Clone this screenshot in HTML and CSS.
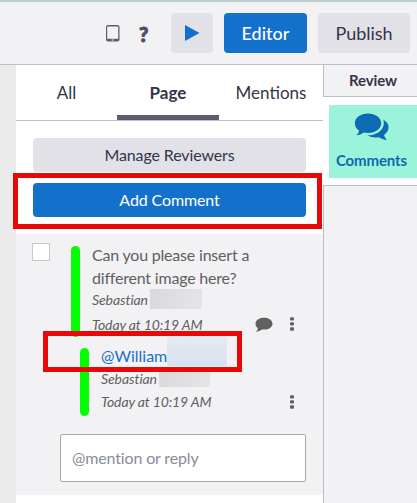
FILE: index.html
```html
<!DOCTYPE html>
<html lang="en">
<head>
<meta charset="utf-8">
<title>Review comments</title>
<link rel="stylesheet" href="styles.css">
</head>
<body>
<header class="toolbar">
  <svg class="tablet" width="14" height="17" viewBox="0 0 14 17"><path fill="#5c5d6e" fill-rule="evenodd" d="M2 0h9.500a2 2 0 0 1 2 2v12.500a2 2 0 0 1-2 2H2a2 2 0 0 1-2-2V2a2 2 0 0 1 2-2zM1.200 1.500v12.300h11V1.500zM5.800 14.500v1h2v-1z"/></svg>
  <span class="help">?</span>
  <button class="btn play" aria-label="Play"><svg width="15" height="16" viewBox="0 0 15 16"><path fill="#1371cc" d="M0 0l14.500 8L0 16z"/></svg></button>
  <button class="btn primary editor">Editor</button>
  <button class="btn publish">Publish</button>
</header>
<div class="workspace">
  <div class="gutter"></div>
  <main class="panel">
    <nav class="tabs">
      <span class="tab">All</span>
      <span class="tab active">Page</span>
      <span class="tab">Mentions</span>
    </nav>
    <div class="actions">
      <button class="btn wide">Manage Reviewers</button>
      <button class="btn primary wide">Add Comment</button>
      <div class="callout callout-add"></div>
    </div>
    <section class="thread">
      <div class="comment">
        <span class="checkbox"></span>
        <span class="bar"></span>
        <div class="content">
          <p class="message">Can you please insert a<br>different image here?</p>
          <p class="author">Sebastian <span class="redacted"></span></p>
          <div class="meta">
            <span class="time">Today at 10:19 AM</span>
            <svg class="bubble" width="18" height="16" viewBox="0 0 18 16"><path fill="#606060" d="M9 1.700c4.800 0 8.500 2.600 8.500 6S13.800 13.600 9 13.600c-.8 0-1.500-.1-2.200-.2C5.200 14.700 3.300 15.600 1 15.700c1-.9 1.700-2 1.900-3.500C1.400 11.100.5 9.500.5 7.700c0-3.400 3.700-6 8.500-6z"/></svg>
            <svg class="dots" width="4" height="14" viewBox="0 0 4 14"><rect y=".2" width="4" height="3.400" rx="1"/><rect y="5.200" width="4" height="3.400" rx="1"/><rect y="10.300" width="4" height="3.400" rx="1"/></svg>
          </div>
        </div>
      </div>
      <div class="comment reply">
        <span class="bar"></span>
        <div class="content">
          <p class="mention">@William<span class="redacted blue"></span></p>
          <p class="author">Sebastian <span class="redacted"></span></p>
          <div class="meta">
            <span class="time">Today at 10:19 AM</span>
            <svg class="dots" width="4" height="14" viewBox="0 0 4 14"><rect y=".2" width="4" height="3.400" rx="1"/><rect y="5.200" width="4" height="3.400" rx="1"/><rect y="10.300" width="4" height="3.400" rx="1"/></svg>
          </div>
        </div>
        <div class="callout callout-mention"></div>
      </div>
      <div class="reply-box">@mention or reply</div>
    </section>
  </main>
  <aside class="side">
    <div class="side-title">Review</div>
    <div class="side-active">
      <div class="side-item">
        <svg width="35" height="28" viewBox="0 0 35 28"><path fill="#0d6bb3" d="M14 .5c7.500 0 13.200 4.300 13.200 9.700S21.500 20 14 20c-1.500 0-2.900-.2-4.200-.5C7.600 21.200 5.500 22 2.500 22.300c1.300-1.300 2.200-2.700 2.600-4.600C2.500 15.900.8 13.200.8 10.200.8 4.800 6.500.5 14 .5z"/><path fill="#0d6bb3" d="M29.400 6.800c3.200 1.800 5.200 4.500 5.200 7.500 0 3.200-1.700 5.700-4.500 7.500.3 2.200 1.300 3.700 2.800 5.200-3.200-.2-5.700-1.200-8-2.700-4.200.7-8.200 0-11.500-2 8.500.2 15.800-4.700 16.400-11.400.1-1.400 0-2.800-.4-4.100z"/></svg>
        <span>Comments</span>
      </div>
    </div>
    <div class="side-rest"></div>
  </aside>
</div>
</body>
</html>
```

FILE: styles.css
```css
* { box-sizing: border-box; }
body {
  margin: 0;
  width: 417px;
  height: 503px;
  overflow: hidden;
  display: flex;
  flex-direction: column;
  font-family: Lato, sans-serif;
  color: #34344a;
  background: #fff;
  white-space: nowrap;
}
p { margin: 0; }
.toolbar {
  height: 65px;
  flex: none;
  display: flex;
  align-items: flex-start;
  padding: 11px 7px 0 106px;
  border-top: 2px solid #b9cfce;
  border-bottom: 1px solid #bcbcca;
  background: #f2f2f4;
}
.tablet { flex: none; margin-top: 12px; }
.help {
  width: 14px;
  margin: 8px 18px 0 19px;
  font: 900 20px/26px Lato, sans-serif;
  color: #50505f;
  -webkit-text-stroke: 1px #50505f;
}
.btn {
  border: 0;
  border-radius: 4px;
  padding: 0;
  font: 18px Lato, sans-serif;
  color: #34344a;
  background: #e2e1e7;
}
.toolbar .btn { height: 40px; flex: none; }
.toolbar .publish { padding-bottom: 1px; letter-spacing: -.05px; }
.btn.primary { color: #fff; background: #1371cc; }
.play { width: 42px; display: flex; align-items: center; justify-content: center; }
.editor { width: 83px; margin: 0 11px; }
.toolbar .editor { padding-bottom: 1px; font-weight: 500; }
.publish { width: 92px; }
.workspace { flex: 1; display: flex; }
.gutter { width: 16px; background: #ebebeb; }
.panel { width: 307px; background: #fff; }
.tabs {
  height: 56px;
  display: grid;
  grid-template-columns: 101px 102px 104px;
  grid-template-rows: 55px;
  border-bottom: 1px solid #bcbcca;
}
.tab { height: 55px; text-align: center; font-size: 17px; line-height: 55px; }
.tab.active { font-weight: 700; border-bottom: 5px solid #5d5d70; }
.actions {
  position: relative;
  height: 113px;
  padding: 17px 17px 0;
  display: flex;
  flex-direction: column;
  gap: 11px;
}
.wide { height: 34px; padding-bottom: 2px; font-size: 16px; letter-spacing: -.12px; }
.callout { position: absolute; border: 5px solid #e90808; }
.callout-add { left: -3px; top: 52px; width: 309px; height: 56px; }
.thread {
  height: 261px;
  padding: 9px 17px 0 16px;
  background: #f2f2f4;
  color: #606060;
}
.comment { display: flex; height: 103px; }
.checkbox { width: 18px; height: 18px; border: 1px solid #c8c8c8; background: #fff; }
.bar { width: 9px; height: 91px; margin: 3px 12px 0 21px; border-radius: 5px; background: #0f0; }
.content { flex: 1; }
.message { font-size: 16px; line-height: 23px; letter-spacing: -.2px; }
.author { display: flex; align-items: center; height: 20px; font-size: 14px; font-style: italic; letter-spacing: -.08px; }
.redacted { width: 52px; height: 20px; margin-left: 2px; background: linear-gradient(110deg, #d9d9dc, #e5e5e8); }
.meta { display: flex; align-items: center; height: 30px; padding-right: 12px; font-size: 14px; font-style: italic; letter-spacing: -.14px; }
.time { flex: 1; }
.dots { margin-left: 17px; fill: #606068; }
.reply { position: relative; height: 88px; padding-left: 48px; }
.reply .bar { height: 68px; margin: 2px 12px 0 0; }
.mention { display: flex; height: 34px; margin-top: -10px; font-size: 16px; line-height: 40px; color: #1371cc; }
.blue { width: 60px; height: 30px; margin: 0; background: linear-gradient(#e6eaf2, #d8e2ef); }
.reply .author { height: 18px; margin-top: -1px; }
.reply .author .redacted { width: 51px; height: 18px; }
.reply .meta { height: 29px; }
.callout-mention { left: 11px; top: -15px; width: 199px; height: 41px; }
.reply-box {
  width: 246px;
  height: 48px;
  margin-left: 28px;
  padding-left: 11px;
  border: 1px solid #a8a8a8;
  border-radius: 2px;
  background: #fff;
  color: #888c96;
  font-size: 16px;
  line-height: 46px;
  letter-spacing: -.15px;
}
.side { width: 94px; display: flex; flex-direction: column; color: #34344a; }
.side-title {
  height: 32px;
  padding-left: 25px;
  border: solid #bcbcca;
  border-width: 0 0 1px 1px;
  background: #f2f2f4;
  font-size: 15px;
  font-weight: 700;
  line-height: 31px;
  letter-spacing: -.1px;
}
.side-active { height: 88px; padding: 8px 0 8px 6px; }
.side-item {
  height: 73px;
  display: flex;
  flex-direction: column;
  padding: 8px 0 0 7px;
  background: #9cf3dc;
  color: #1068ad;
  font-size: 15px;
  font-weight: 700;
  letter-spacing: -.15px;
}
.side-item svg { margin: 0 0 10px 18px; }
.side-rest { flex: 1; border: solid #bcbcca; border-width: 1px 0 0 1px; background: #f2f2f4; }
```
